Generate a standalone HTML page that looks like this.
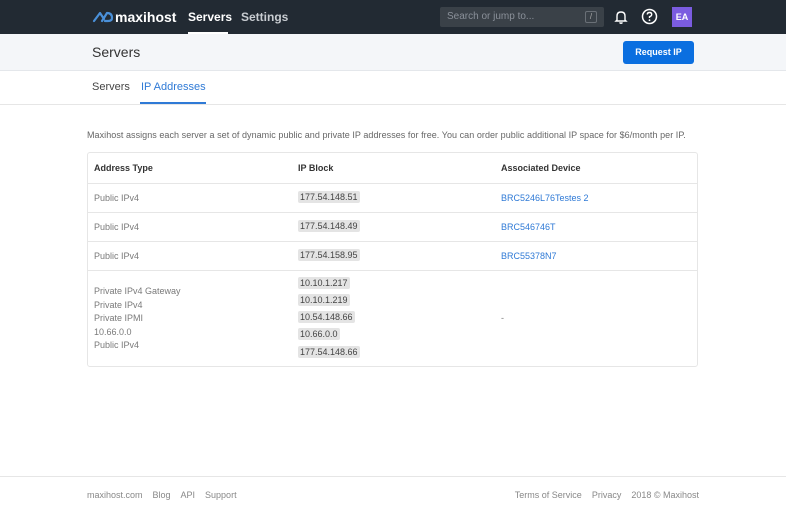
<!DOCTYPE html>
<html><head><style>
*{margin:0;padding:0;box-sizing:border-box}
body{width:786px;height:512px;background:#fff;font-family:"Liberation Sans",sans-serif;position:relative;overflow:hidden}
.nav{position:absolute;left:0;top:0;width:786px;height:34px;background:#222a33}
.t{position:absolute;white-space:nowrap}
.sub{position:absolute;top:34px;left:0;width:786px;height:37px;background:#f4f6f9;border-bottom:1px solid #e4e7eb}
.code{position:absolute;left:298px;background:#e4e4e4;color:#444;font-size:9px;line-height:12px;height:12px;padding:0 2px;border-radius:2px;white-space:nowrap}
.g{color:#7a7a7a;font-size:9px}
.l{color:#2f7ad6;font-size:9px}
.row{position:absolute;left:87px;width:611px;border-top:1px solid #e6e6e6}
</style></head><body>
<div class="nav">
<svg style="position:absolute;left:92px;top:10px" width="22" height="13" viewBox="0 0 22 13"><path d="M2 11 L8 3 L12 9 M10 11 L15 3 Q20 3 20 8 Q20 11 16 11 L13 11" fill="none" stroke="#4a90d9" stroke-width="2.2" stroke-linecap="round" stroke-linejoin="round"/></svg>
<div class="t" style="left:115px;top:9px;color:#fff;font-size:14px;font-weight:bold">maxihost</div>
<div class="t" style="left:188px;top:10px;color:#fff;font-size:12px;font-weight:bold">Servers</div>
<div style="position:absolute;left:188px;top:32px;width:40px;height:2px;background:#fff"></div>
<div class="t" style="left:241px;top:10px;color:#c8ccd1;font-size:12px;font-weight:bold">Settings</div>
<div style="position:absolute;left:440px;top:7px;width:164px;height:20px;background:#3a4148;border-radius:2px"></div>
<div class="t" style="left:447px;top:11px;color:#8a9099;font-size:10px">Search or jump to...</div>
<div style="position:absolute;left:585px;top:11px;width:12px;height:12px;border:1px solid #6a7077;border-radius:2px;color:#aaa;font-size:8px;text-align:center;line-height:10px">/</div>
<svg style="position:absolute;left:614px;top:9px" width="14" height="16" viewBox="0 0 14 16"><path d="M3 11 L3 7 Q3 3 7 3 Q11 3 11 7 L11 11 L12 12 L2 12 Z M5.5 13.5 Q7 15 8.5 13.5" fill="none" stroke="#fff" stroke-width="1.4"/></svg>
<svg style="position:absolute;left:641px;top:8px" width="17" height="17" viewBox="0 0 17 17"><circle cx="8.5" cy="8.5" r="7" fill="none" stroke="#fff" stroke-width="1.5"/><path d="M6.3 6.5 Q6.3 4.5 8.5 4.5 Q10.7 4.5 10.7 6.5 Q10.7 8 8.5 8.7 L8.5 10" fill="none" stroke="#fff" stroke-width="1.4"/><circle cx="8.5" cy="12.2" r=".9" fill="#fff"/></svg>
<div style="position:absolute;left:672px;top:7px;width:20px;height:20px;background:#7b5ce0;color:#fff;font-size:9px;font-weight:bold;text-align:center;line-height:20px">EA</div>
</div>
<div class="sub">
<div class="t" style="left:92px;top:10px;color:#333;font-size:14px">Servers</div>
<div style="position:absolute;left:623px;top:7px;width:71px;height:23px;background:#0b6fe0;border-radius:3px;color:#fff;font-size:9px;font-weight:bold;text-align:center;line-height:23px">Request IP</div>
</div>
<div class="t" style="left:92px;top:81px;color:#444;font-size:11px">Servers</div>
<div class="t" style="left:141px;top:81px;color:#2f7ad6;font-size:11px">IP Addresses</div>
<div style="position:absolute;left:140px;top:102px;width:66px;height:2px;background:#2f7ad6"></div>
<div style="position:absolute;left:0;top:104px;width:786px;height:1px;background:#e6e6e6"></div>
<div class="t" style="left:87px;top:130px;color:#666;font-size:9px;letter-spacing:0.05px">Maxihost assigns each server a set of dynamic public and private IP addresses for free. You can order public additional IP space for $6/month per IP.</div>
<div style="position:absolute;left:87px;top:152px;width:611px;height:215px;border:1px solid #e6e6e6;border-radius:3px"></div>
<div class="t" style="left:94px;top:163px;color:#333;font-size:9px;font-weight:bold">Address Type</div>
<div class="t" style="left:298px;top:163px;color:#333;font-size:9px;font-weight:bold">IP Block</div>
<div class="t" style="left:501px;top:163px;color:#333;font-size:9px;font-weight:bold">Associated Device</div>
<div class="row" style="top:183px"></div><div class="row" style="top:212px"></div><div class="row" style="top:241px"></div><div class="row" style="top:270px"></div>
<div class="t g" style="left:94px;top:193px">Public IPv4</div><div class="code" style="top:191px">177.54.148.51</div><div class="t l" style="left:501px;top:193px">BRC5246L76Testes 2</div>
<div class="t g" style="left:94px;top:222px">Public IPv4</div><div class="code" style="top:220px">177.54.148.49</div><div class="t l" style="left:501px;top:222px">BRC546746T</div>
<div class="t g" style="left:94px;top:251px">Public IPv4</div><div class="code" style="top:249px">177.54.158.95</div><div class="t l" style="left:501px;top:251px">BRC55378N7</div>
<div class="t g" style="left:94px;top:285px;line-height:13.6px">Private IPv4 Gateway<br>Private IPv4<br>Private IPMI<br>10.66.0.0<br>Public IPv4</div>
<div class="code" style="top:277px">10.10.1.217</div>
<div class="code" style="top:294px">10.10.1.219</div>
<div class="code" style="top:311px">10.54.148.66</div>
<div class="code" style="top:328px">10.66.0.0</div>
<div class="code" style="top:346px">177.54.148.66</div>
<div class="t g" style="left:501px;top:313px">-</div>
<div style="position:absolute;left:0;top:476px;width:786px;height:1px;background:#e6e6e6"></div>
<div class="t g" style="left:87px;top:490px;color:#888">maxihost.com&nbsp;&nbsp;&nbsp;&nbsp;Blog&nbsp;&nbsp;&nbsp;&nbsp;API&nbsp;&nbsp;&nbsp;&nbsp;Support</div>
<div class="t g" style="right:87px;top:490px;color:#888">Terms of Service&nbsp;&nbsp;&nbsp;&nbsp;Privacy&nbsp;&nbsp;&nbsp;&nbsp;2018 © Maxihost</div>
</body></html>
